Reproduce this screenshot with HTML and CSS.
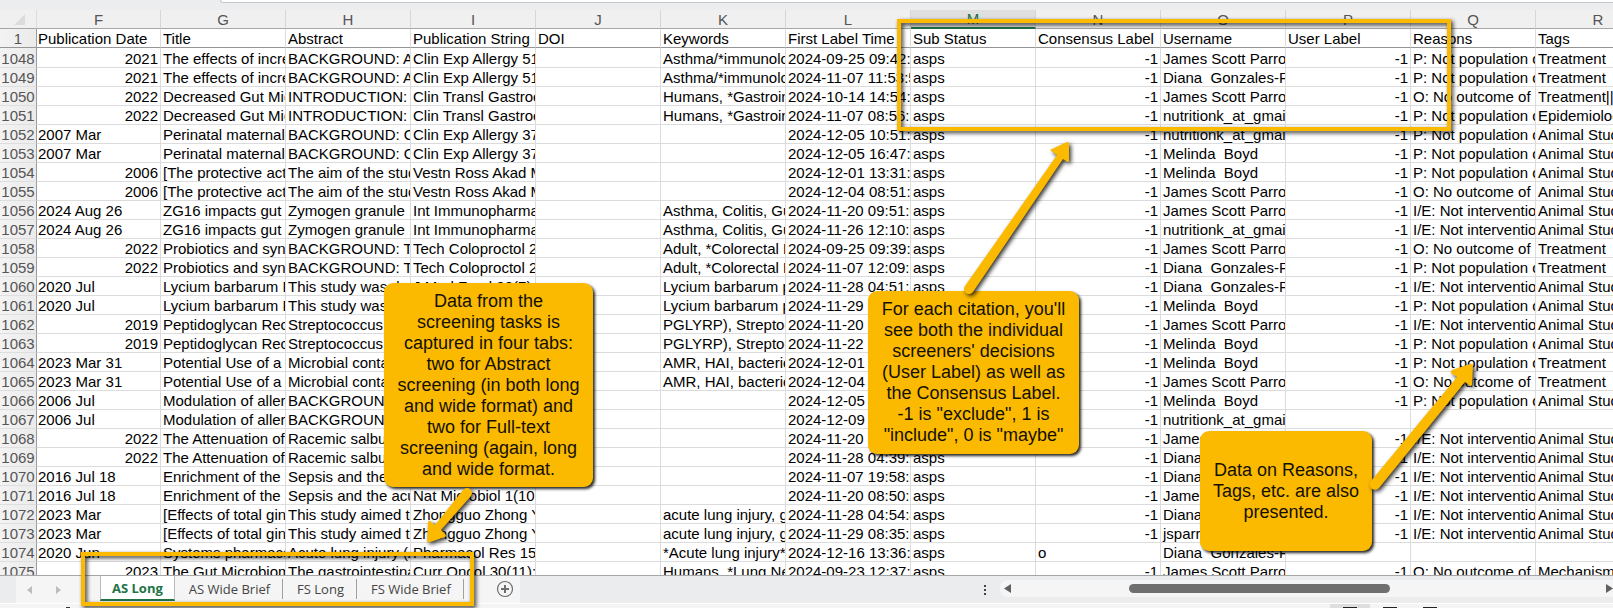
FILE: index.html
```html
<!DOCTYPE html>
<html lang="en">
<head>
<meta charset="utf-8">
<title>Screening data</title>
<link rel="stylesheet" href="styles.css">
</head>
<body>
<div class="app">
<div class="formula-strip"><div class="formula-box"></div></div>
<main class="grid">
<table class="sheet">
<colgroup><col class="col-rows"><col class="col-first"><col span="12" class="col-data"></colgroup>
<thead>
<tr class="letters"><th class="corner"><svg width="11" height="11" viewBox="0 0 11 11"><path d="M11 0V11H0Z" fill="#dcdcdc"/></svg></th><th>F</th><th>G</th><th>H</th><th>I</th><th>J</th><th>K</th><th>L</th><th class="selected">M</th><th>N</th><th>O</th><th>P</th><th>Q</th><th>R</th></tr>
<tr class="frozen"><th>1</th><td>Publication Date</td><td>Title</td><td>Abstract</td><td>Publication String</td><td>DOI</td><td>Keywords</td><td>First Label Time</td><td>Sub Status</td><td>Consensus Label</td><td>Username</td><td>User Label</td><td>Reasons</td><td>Tags</td></tr>
</thead>
<tbody>
<tr><th>1048</th><td class="num">2021</td><td>The effects of increa</td><td>BACKGROUND: As</td><td>Clin Exp Allergy 51(</td><td></td><td>Asthma/*immunolog</td><td>2024-09-25 09:42:32</td><td>asps</td><td class="num">-1</td><td>James Scott Parrott</td><td class="num">-1</td><td>P: Not population of</td><td>Treatment</td></tr>
<tr><th>1049</th><td class="num">2021</td><td>The effects of increa</td><td>BACKGROUND: As</td><td>Clin Exp Allergy 51(</td><td></td><td>Asthma/*immunolog</td><td>2024-11-07 11:53:52</td><td>asps</td><td class="num">-1</td><td>Diana &nbsp;Gonzales-Pa</td><td class="num">-1</td><td>P: Not population of</td><td>Treatment</td></tr>
<tr><th>1050</th><td class="num">2022</td><td>Decreased Gut Micro</td><td>INTRODUCTION: A</td><td>Clin Transl Gastroen</td><td></td><td>Humans, *Gastroint</td><td>2024-10-14 14:54:32</td><td>asps</td><td class="num">-1</td><td>James Scott Parrott</td><td class="num">-1</td><td>O: No outcome of in</td><td>Treatment||Epi</td></tr>
<tr><th>1051</th><td class="num">2022</td><td>Decreased Gut Micro</td><td>INTRODUCTION: A</td><td>Clin Transl Gastroen</td><td></td><td>Humans, *Gastroint</td><td>2024-11-07 08:56:32</td><td>asps</td><td class="num">-1</td><td>nutritionk_at_gmail</td><td class="num">-1</td><td>P: Not population of</td><td>Epidemiology</td></tr>
<tr><th>1052</th><td>2007 Mar</td><td>Perinatal maternal</td><td>BACKGROUND: Oc</td><td>Clin Exp Allergy 37(</td><td></td><td></td><td>2024-12-05 10:51:22</td><td>asps</td><td class="num">-1</td><td>nutritionk_at_gmail</td><td class="num">-1</td><td>P: Not population of</td><td>Animal Studies</td></tr>
<tr><th>1053</th><td>2007 Mar</td><td>Perinatal maternal</td><td>BACKGROUND: Oc</td><td>Clin Exp Allergy 37(</td><td></td><td></td><td>2024-12-05 16:47:52</td><td>asps</td><td class="num">-1</td><td>Melinda &nbsp;Boyd</td><td class="num">-1</td><td>P: Not population of</td><td>Animal Studies</td></tr>
<tr><th>1054</th><td class="num">2006</td><td>[The protective activ</td><td>The aim of the study</td><td>Vestn Ross Akad Me</td><td></td><td></td><td>2024-12-01 13:31:12</td><td>asps</td><td class="num">-1</td><td>Melinda &nbsp;Boyd</td><td class="num">-1</td><td>P: Not population of</td><td>Animal Studies</td></tr>
<tr><th>1055</th><td class="num">2006</td><td>[The protective activ</td><td>The aim of the study</td><td>Vestn Ross Akad Me</td><td></td><td></td><td>2024-12-04 08:51:12</td><td>asps</td><td class="num">-1</td><td>James Scott Parrott</td><td class="num">-1</td><td>O: No outcome of in</td><td>Animal Studies</td></tr>
<tr><th>1056</th><td>2024 Aug 26</td><td>ZG16 impacts gut mi</td><td>Zymogen granule 16</td><td>Int Immunopharmac</td><td></td><td>Asthma, Colitis, Gut</td><td>2024-11-20 09:51:02</td><td>asps</td><td class="num">-1</td><td>James Scott Parrott</td><td class="num">-1</td><td>I/E: Not intervention</td><td>Animal Studies</td></tr>
<tr><th>1057</th><td>2024 Aug 26</td><td>ZG16 impacts gut mi</td><td>Zymogen granule 16</td><td>Int Immunopharmac</td><td></td><td>Asthma, Colitis, Gut</td><td>2024-11-26 12:10:12</td><td>asps</td><td class="num">-1</td><td>nutritionk_at_gmail</td><td class="num">-1</td><td>I/E: Not intervention</td><td>Animal Studies</td></tr>
<tr><th>1058</th><td class="num">2022</td><td>Probiotics and synbio</td><td>BACKGROUND: Th</td><td>Tech Coloproctol 26</td><td></td><td>Adult, *Colorectal N</td><td>2024-09-25 09:39:22</td><td>asps</td><td class="num">-1</td><td>James Scott Parrott</td><td class="num">-1</td><td>O: No outcome of in</td><td>Treatment</td></tr>
<tr><th>1059</th><td class="num">2022</td><td>Probiotics and synbio</td><td>BACKGROUND: Th</td><td>Tech Coloproctol 26</td><td></td><td>Adult, *Colorectal N</td><td>2024-11-07 12:09:22</td><td>asps</td><td class="num">-1</td><td>Diana &nbsp;Gonzales-Pa</td><td class="num">-1</td><td>P: Not population of</td><td>Treatment</td></tr>
<tr><th>1060</th><td>2020 Jul</td><td>Lycium barbarum Po</td><td>This study was desi</td><td>J Med Food 20(7)</td><td></td><td>Lycium barbarum po</td><td>2024-11-28 04:51:22</td><td>asps</td><td class="num">-1</td><td>Diana &nbsp;Gonzales-Pa</td><td class="num">-1</td><td>I/E: Not intervention</td><td>Animal Studies</td></tr>
<tr><th>1061</th><td>2020 Jul</td><td>Lycium barbarum Po</td><td>This study was</td><td></td><td></td><td>Lycium barbarum po</td><td>2024-11-29</td><td></td><td class="num">-1</td><td>Melinda &nbsp;Boyd</td><td class="num">-1</td><td>P: Not population of</td><td>Animal Studies</td></tr>
<tr><th>1062</th><td class="num">2019</td><td>Peptidoglycan Reco</td><td>Streptococcus</td><td></td><td></td><td>PGLYRP), Streptoco</td><td>2024-11-20 0</td><td></td><td class="num">-1</td><td>James Scott Parrott</td><td class="num">-1</td><td>I/E: Not intervention</td><td>Animal Studies</td></tr>
<tr><th>1063</th><td class="num">2019</td><td>Peptidoglycan Reco</td><td>Streptococcus</td><td></td><td></td><td>PGLYRP), Streptoco</td><td>2024-11-22</td><td></td><td class="num">-1</td><td>Melinda &nbsp;Boyd</td><td class="num">-1</td><td>P: Not population of</td><td>Animal Studies</td></tr>
<tr><th>1064</th><td>2023 Mar 31</td><td>Potential Use of a C</td><td>Microbial conta</td><td></td><td></td><td>AMR, HAI, bacteriop</td><td>2024-12-01</td><td></td><td class="num">-1</td><td>Melinda &nbsp;Boyd</td><td class="num">-1</td><td>P: Not population of</td><td>Treatment</td></tr>
<tr><th>1065</th><td>2023 Mar 31</td><td>Potential Use of a C</td><td>Microbial conta</td><td></td><td></td><td>AMR, HAI, bacteriop</td><td>2024-12-04 0</td><td></td><td class="num">-1</td><td>James Scott Parrott</td><td class="num">-1</td><td>O: No outcome of in</td><td>Treatment</td></tr>
<tr><th>1066</th><td>2006 Jul</td><td>Modulation of allergi</td><td>BACKGROUND:</td><td></td><td></td><td></td><td>2024-12-05</td><td></td><td class="num">-1</td><td>Melinda &nbsp;Boyd</td><td class="num">-1</td><td>P: Not population of</td><td>Animal Studies</td></tr>
<tr><th>1067</th><td>2006 Jul</td><td>Modulation of allergi</td><td>BACKGROUND:</td><td></td><td></td><td></td><td>2024-12-09 0</td><td></td><td class="num">-1</td><td>nutritionk_at_gmail</td><td></td><td></td><td></td></tr>
<tr><th>1068</th><td class="num">2022</td><td>The Attenuation of C</td><td>Racemic salbut</td><td></td><td></td><td></td><td>2024-11-20 1</td><td></td><td class="num">-1</td><td>James</td><td class="num">-1</td><td>I/E: Not intervention</td><td>Animal Studies</td></tr>
<tr><th>1069</th><td class="num">2022</td><td>The Attenuation of C</td><td>Racemic salbut</td><td></td><td></td><td></td><td>2024-11-28 04:39:52</td><td>asps</td><td class="num">-1</td><td>Diana</td><td class="num">-1</td><td>I/E: Not intervention</td><td>Animal Studies</td></tr>
<tr><th>1070</th><td>2016 Jul 18</td><td>Enrichment of the lu</td><td>Sepsis and the</td><td></td><td></td><td></td><td>2024-11-07 19:58:22</td><td>asps</td><td class="num">-1</td><td>Diana</td><td class="num">-1</td><td>I/E: Not intervention</td><td>Animal Studies</td></tr>
<tr><th>1071</th><td>2016 Jul 18</td><td>Enrichment of the lu</td><td>Sepsis and the acut</td><td>Nat Microbiol 1(10)</td><td></td><td></td><td>2024-11-20 08:50:12</td><td>asps</td><td class="num">-1</td><td>James</td><td class="num">-1</td><td>I/E: Not intervention</td><td>Animal Studies</td></tr>
<tr><th>1072</th><td>2023 Mar</td><td>[Effects of total ginse</td><td>This study aimed to</td><td>Zhongguo Zhong Ya</td><td></td><td>acute lung injury, gu</td><td>2024-11-28 04:54:42</td><td>asps</td><td class="num">-1</td><td>Diana</td><td class="num">-1</td><td>I/E: Not intervention</td><td>Animal Studies</td></tr>
<tr><th>1073</th><td>2023 Mar</td><td>[Effects of total ginse</td><td>This study aimed to</td><td>Zhongguo Zhong Ya</td><td></td><td>acute lung injury, gu</td><td>2024-11-29 08:35:12</td><td>asps</td><td class="num">-1</td><td>jsparrott</td><td class="num">-1</td><td>I/E: Not intervention</td><td>Animal Studies</td></tr>
<tr><th>1074</th><td>2020 Jun</td><td>Systems pharmacol</td><td>Acute lung injury (AL</td><td>Pharmacol Res 156</td><td></td><td>*Acute lung injury*C</td><td>2024-12-16 13:36:32</td><td>asps</td><td>o</td><td>Diana &nbsp;Gonzales-Pa</td><td></td><td></td><td></td></tr>
<tr><th>1075</th><td class="num">2023</td><td>The Gut Microbiome</td><td>The gastrointestinal</td><td>Curr Oncol 30(11):</td><td></td><td>Humans, *Lung Neo</td><td>2024-09-23 12:37:32</td><td>asps</td><td class="num">-1</td><td>James Scott Parrott</td><td class="num">-1</td><td>O: No outcome of in</td><td>Mechanisms</td></tr>
</tbody>
</table>
</main>
<div class="tabbar">
<div class="tabnav">
<button class="icon-btn" aria-label="Previous sheet"><svg width="5" height="8" viewBox="0 0 5 8"><path d="M5 0V8L0 4Z" fill="#bcbcbc"/></svg></button>
<button class="icon-btn" aria-label="Next sheet"><svg width="5" height="8" viewBox="0 0 5 8"><path d="M0 0V8L5 4Z" fill="#bcbcbc"/></svg></button>
</div>
<nav class="tabs">
<button class="tab active">AS Long</button><button class="tab">AS Wide Brief</button><button class="tab">FS Long</button><button class="tab">FS Wide Brief</button>
<button class="icon-btn add" aria-label="New sheet"><svg width="18" height="18" viewBox="0 0 18 18" fill="none" stroke="#6e6e6e"><circle cx="9" cy="9" r="7.5" stroke-width="1.2"/><path d="M9 5V13M5 9H13" stroke-width="2"/></svg></button>
</nav>
<div class="dots"><i></i><i></i><i></i></div>
<div class="scroll">
<button class="icon-btn" aria-label="Scroll left"><svg width="7" height="9" viewBox="0 0 7 9"><path d="M7 0V9L0 4.5Z" fill="#606060"/></svg></button>
<div class="gap-before"></div><div class="thumb"></div><div class="gap-after"></div>
<button class="icon-btn" aria-label="Scroll right"><svg width="7" height="9" viewBox="0 0 7 9"><path d="M0 0V9L7 4.5Z" fill="#606060"/></svg></button>
</div>
</div>
<footer class="status"><span class="status-mark"></span><div class="views"><i class="on"></i><i></i><i></i></div></footer>

<div class="frame frame-columns"></div>
<div class="frame frame-tabs"></div>
<div class="note note-tabs">Data from the<br>screening tasks is<br>captured in four tabs:<br>two for Abstract<br>screening (in both long<br>and wide format) and<br>two for Full-text<br>screening (again, long<br>and wide format.</div>
<div class="note note-labels">For each citation, you'll<br>see both the individual<br>screeners' decisions<br>(User Label) as well as<br>the Consensus Label.<br>-1 is "exclude", 1 is<br>"include", 0 is "maybe"</div>
<div class="note note-reasons">Data on Reasons,<br>Tags, etc. are also<br>presented.</div>
<svg class="arrows" width="1613" height="608" viewBox="0 0 1613 608" fill="#fbba00">
<path d="M965 286L1057 155L1051 151Q1050 149 1052 149L1067 142Q1069 142 1069 144V161Q1068 163 1066 161L1063 159L973 292A5 5 0 0 1 965 286Z"/>
<path d="M463 490L435 525L430 521Q428 520 428 523L427 541Q428 543 430 542L445 537Q447 536 445 534L441 530L471 496A5 5 0 0 0 463 490Z"/>
<path d="M1371 481L1457 377L1451 373Q1450 371 1452 370L1470 364Q1473 364 1473 366L1472 385Q1471 387 1469 385L1465 382L1379 488A5 5 0 0 1 1371 481Z"/>
</svg>
</div>
</body>
</html>
```
FILE: styles.css
```css
* { box-sizing: border-box; }
body { margin: 0; font-family: "Liberation Sans", Arial, sans-serif; background: #fff; }
button { font: inherit; border: 0; background: none; padding: 0; margin: 0; }
.app { position: relative; display: flex; flex-direction: column; height: 100vh; overflow: hidden; }

/* strip above the grid */
.formula-strip { flex: none; height: 10px; background: #ecedef; padding-left: 220px; }
.formula-box { height: 3px; background: #fff; border: 1px solid #c8c8c8; border-top: 0; border-right: 0; border-bottom-left-radius: 4px; }

/* grid */
.grid { flex: 1; min-height: 0; overflow: hidden; border-bottom: 1px solid #a6a6a6; }
.sheet { table-layout: fixed; border-collapse: separate; border-spacing: 0; width: 1661px; font-size: 15px; line-height: 17px; }
.col-rows { width: 37px; }
.col-first { width: 124px; }
.col-data { width: 125px; }
.sheet th, .sheet td { height: 19px; padding: 1px 2px 0; font-weight: normal; white-space: nowrap; overflow: hidden; }
.sheet td { text-align: left; color: #000; border-right: 1px solid #dcdcdc; border-bottom: 1px solid #dcdcdc; }
.sheet th { text-align: center; color: #555; background: #f0f0f0; border-right: 1px solid #d6d6d6; }
.sheet td:nth-child(2) { padding-left: 1px; }
.sheet .num { text-align: right; }
.sheet tbody th, .sheet .frozen th { padding: 1px 0 0; background: linear-gradient(90deg, #f3f3f3, #ebebeb); border-right: 1px solid #9b9b9b; border-bottom: 1px solid #dedede; }
.sheet .letters th { border-bottom: 1px solid #a6a6a6; }
.sheet .letters .corner { padding: 0 11px 0 0; text-align: right; border-right-color: #dcdcdc; }
.corner svg { display: block; margin-left: auto; }
.sheet .letters .selected { padding-bottom: 0; color: #217346; background: #dfdfdf; border-bottom: 2px solid #217346; line-height: 16px; }
.sheet .frozen th, .sheet .frozen td { border-bottom: 1px solid #959595; }
.sheet tbody tr:first-child th, .sheet tbody tr:first-child td { height: 20px; }

/* sheet tabs */
.tabbar { flex: none; display: flex; height: 27px; background: #ebecee; }
.icon-btn { display: flex; align-items: center; justify-content: center; }
.tabnav { display: flex; align-items: center; gap: 24px; width: 84px; margin-left: 16px; padding-left: 11px; background: #f5f5f5; }
.tabs { display: flex; gap: 1px; width: 420px; background: #f5f5f5; font: 13px/24px "Open Sans", "Noto Sans", sans-serif; color: #444; }
.tab { position: relative; height: 25px; padding: 0 13px; color: #444; }
.tab:not(.active)::after { content: ""; position: absolute; right: 0; top: 3px; height: 20px; border-right: 1px solid #a0a0a0; }
.tab.active { padding: 0 11px; font-weight: bold; color: #217346; background: #fff; border-bottom: 2px solid #217346; border-left: 1px solid #bcbcbc; border-right: 1px solid #bcbcbc; line-height: 22px; }
.add { width: 18px; height: 26px; margin-left: 31px; }
.dots { display: flex; flex-direction: column; align-items: center; justify-content: center; gap: 2px; width: 10px; margin-left: auto; margin-right: 10px; }
.dots i { width: 2px; height: 2px; background: #444; }
.scroll { display: flex; align-items: center; flex: 0 0 38%; height: 17px; margin-top: 4px; padding-left: 4px; background: #f5f5f5; border-radius: 8px 0 0 8px; }
.gap-before { flex: 118; }
.thumb { flex: 262; height: 9px; border-radius: 5px; background: #6f6f6f; }
.gap-after { flex: 216; }

/* status bar */
.status { flex: none; display: flex; justify-content: space-between; height: 5px; padding: 0 163px 0 66px; background: #f4f4f4; border-top: 1px solid #fff; }
.status-mark { align-self: flex-end; width: 4px; height: 1px; background: #333; }
.views { display: flex; }
.views i { width: 40px; padding: 3px 13px 0; }
.views i::before { content: ""; display: block; height: 1px; background: #222; }
.views .on { background: #dedede; }

/* annotations */
.frame { position: absolute; border: 4px solid #fbba00; filter: drop-shadow(2px 2px 2px rgba(0, 0, 0, .8)); }
.frame-columns { left: 897px; top: 19px; width: 554px; height: 112px; }
.frame-tabs { left: 81px; top: 552px; width: 393px; height: 54px; }
.note { position: absolute; display: flex; align-items: center; justify-content: center; text-align: center; font-size: 18px; line-height: 21px; color: #141000; background: #fbba00; border-radius: 9px; box-shadow: 2px 2px 3px rgba(0, 0, 0, .85); }
.note-tabs { left: 384px; top: 283px; width: 209px; height: 204px; }
.note-labels { left: 868px; top: 291px; width: 211px; height: 163px; }
.note-reasons { left: 1200px; top: 431px; width: 172px; height: 120px; }
.arrows { position: absolute; left: 0; top: 0; pointer-events: none; filter: drop-shadow(2px 2px 2px rgba(0, 0, 0, .8)); }
```
